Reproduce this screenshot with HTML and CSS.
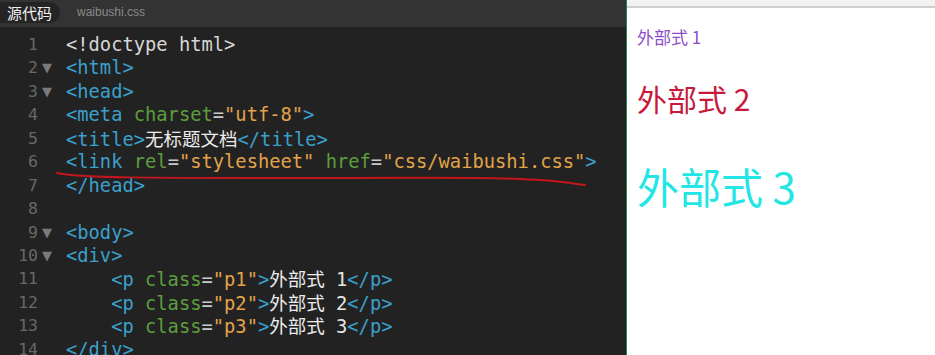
FILE: index.html
```html
<!DOCTYPE html>
<html>
<head>
<meta charset="utf-8">
<link rel="stylesheet" href="styles.css">
</head>
<body>
<div class="app">
  <div class="editor">
    <div class="topbar">
      <span class="tab">源代码</span>
      <span class="file">waibushi.css</span>
    </div>
    <div class="code">
      <div class="line"><span class="ln">1</span><span class="fold"></span><span class="src"><span class="dt">&lt;!doctype html&gt;</span></span></div>
      <div class="line"><span class="ln">2</span><span class="fold">▼</span><span class="src"><span class="t">&lt;html&gt;</span></span></div>
      <div class="line"><span class="ln">3</span><span class="fold">▼</span><span class="src"><span class="t">&lt;head&gt;</span></span></div>
      <div class="line"><span class="ln">4</span><span class="fold"></span><span class="src"><span class="t">&lt;meta</span> <span class="a">charset</span><span class="e">=</span><span class="s">"utf-8"</span><span class="t">&gt;</span></span></div>
      <div class="line"><span class="ln">5</span><span class="fold"></span><span class="src"><span class="t">&lt;title&gt;</span><span class="x">无标题文档</span><span class="t">&lt;/title&gt;</span></span></div>
      <div class="line"><span class="ln">6</span><span class="fold"></span><span class="src"><span class="t">&lt;link</span> <span class="a">rel</span><span class="e">=</span><span class="s">"stylesheet"</span> <span class="a">href</span><span class="e">=</span><span class="s">"css/waibushi.css"</span><span class="t">&gt;</span></span></div>
      <div class="line"><span class="ln">7</span><span class="fold"></span><span class="src"><span class="t">&lt;/head&gt;</span></span></div>
      <div class="line"><span class="ln">8</span><span class="fold"></span><span class="src"></span></div>
      <div class="line"><span class="ln">9</span><span class="fold">▼</span><span class="src"><span class="t">&lt;body&gt;</span></span></div>
      <div class="line"><span class="ln">10</span><span class="fold">▼</span><span class="src"><span class="t">&lt;div&gt;</span></span></div>
      <div class="line"><span class="ln">11</span><span class="fold"></span><span class="src">    <span class="t">&lt;p</span> <span class="a">class</span><span class="e">=</span><span class="s">"p1"</span><span class="t">&gt;</span><span class="x">外部式</span><span class="y"> 1</span><span class="t">&lt;/p&gt;</span></span></div>
      <div class="line"><span class="ln">12</span><span class="fold"></span><span class="src">    <span class="t">&lt;p</span> <span class="a">class</span><span class="e">=</span><span class="s">"p2"</span><span class="t">&gt;</span><span class="x">外部式</span><span class="y"> 2</span><span class="t">&lt;/p&gt;</span></span></div>
      <div class="line"><span class="ln">13</span><span class="fold"></span><span class="src">    <span class="t">&lt;p</span> <span class="a">class</span><span class="e">=</span><span class="s">"p3"</span><span class="t">&gt;</span><span class="x">外部式</span><span class="y"> 3</span><span class="t">&lt;/p&gt;</span></span></div>
      <div class="line"><span class="ln">14</span><span class="fold"></span><span class="src"><span class="t">&lt;/div&gt;</span></span></div>
      <svg class="mark" width="626" height="328" viewBox="0 27 626 328">
        <path d="M57 173 C 75 178, 150 178, 300 178 S 470 177, 520 179 S 572 184, 585 185" fill="none" stroke="#c4161c" stroke-width="2" stroke-linecap="round"/>
      </svg>
    </div>
  </div>
  <div class="preview">
    <div class="chrome"></div>
    <div class="page">
      <p class="p1">外部式 1</p>
      <p class="p2">外部式 2</p>
      <p class="p3">外部式 3</p>
    </div>
  </div>
</div>
</body>
</html>
```

FILE: styles.css
```css
html, body {
  margin: 0;
  padding: 0;
}
body {
  width: 935px;
  height: 355px;
  overflow: hidden;
  background: #ffffff;
}
.app {
  display: flex;
  width: 935px;
  height: 355px;
}
.editor {
  width: 626px;
  flex: 0 0 626px;
  display: flex;
  flex-direction: column;
  background: #222222;
  border-right: 1px solid #1f8a4c;
}
.topbar {
  height: 27px;
  flex: 0 0 27px;
  background: #333333;
  display: flex;
  align-items: center;
  gap: 17px;
}
.tab {
  background: #242424;
  color: #f0f0f0;
  font-family: "Noto Sans CJK SC", sans-serif;
  font-size: 15px;
  line-height: 21px;
  padding: 0 8px 0 7px;
  border-radius: 0 11px 11px 0;
  margin-top: -2px;
}
.file {
  color: #8a8a8a;
  font-family: "Liberation Sans", Arial, sans-serif;
  font-size: 12px;
  margin-top: -3px;
}
.code {
  position: relative;
  flex: 1;
  padding-top: 6px;
  overflow: hidden;
}
.line {
  display: flex;
  height: 23.45px;
  line-height: 23.45px;
  white-space: pre;
}
.ln {
  width: 38px;
  text-align: right;
  color: #686868;
  font-family: "DejaVu Sans Mono", monospace;
  font-size: 16.5px;
}
.fold {
  width: 28px;
  padding-left: 4px;
  box-sizing: border-box;
  color: #7a7a7a;
  font-family: "DejaVu Sans", sans-serif;
  font-size: 13px;
}
.src {
  font-family: "DejaVu Sans Mono", "Noto Sans CJK SC", monospace;
  font-size: 18.75px;
  color: #e2e2e2;
}
.dt { color: #d6d6d6; }
.t { color: #3aa0cc; }
.a { color: #5d9e3e; }
.e { color: #c9c9c9; }
.s { color: #e3a24a; }
.x { color: #ececec; font-family: "Noto Sans CJK SC", sans-serif; font-size: 18.5px; }
.y { color: #e6e6e6; }
.mark {
  position: absolute;
  left: 0;
  top: 0;
}
.preview {
  flex: 1;
  display: flex;
  flex-direction: column;
  background: #ffffff;
}
.chrome {
  height: 6px;
  background: #f2f2f2;
  border-bottom: 2px solid #cfcfcf;
}
.page {
  padding-left: 10px;
  font-family: "Noto Sans CJK SC", sans-serif;
}
.page p {
  margin: 0;
  line-height: 1.2;
}
.p1 {
  color: #8b4dc8;
  font-size: 17px;
  margin-top: 19px !important;
}
.p2 {
  color: #c8193a;
  font-size: 30px;
  margin-top: 33px !important;
}
.p3 {
  color: #22e6e6;
  font-size: 42px;
  margin-top: 45px !important;
}
```
